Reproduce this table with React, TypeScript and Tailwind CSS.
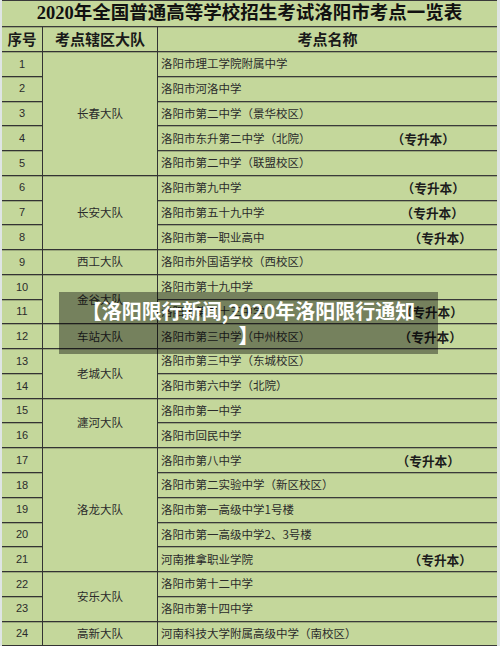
const rows = [
  { no: 1, name: "洛阳市理工学院附属中学" },
  { no: 2, name: "洛阳市河洛中学" },
  { no: 3, name: "洛阳市第二中学（景华校区）" },
  { no: 4, name: "洛阳市东升第二中学（北院）", tag: "mr-[42px]" },
  { no: 5, name: "洛阳市第二中学（联盟校区）" },
  { no: 6, name: "洛阳市第九中学", tag: "mr-[32px]" },
  { no: 7, name: "洛阳市第五十九中学", tag: "mr-[33px]" },
  { no: 8, name: "洛阳市第一职业高中", tag: "mr-[25px]" },
  { no: 9, name: "洛阳市外国语学校（西校区）" },
  { no: 10, name: "洛阳市第十九中学" },
  { no: 11, name: "洛阳市第二十三中学", tag: "mr-[34px]" },
  { no: 12, name: "洛阳市第三中学（中州校区）", tag: "mr-[35px]" },
  { no: 13, name: "洛阳市第三中学（东城校区）" },
  { no: 14, name: "洛阳市第六中学（北院）" },
  { no: 15, name: "洛阳市第一中学" },
  { no: 16, name: "洛阳市回民中学" },
  { no: 17, name: "洛阳市第八中学", tag: "mr-[37px]" },
  { no: 18, name: "洛阳市第二实验中学（新区校区）" },
  { no: 19, name: "洛阳市第一高级中学1号楼" },
  { no: 20, name: "洛阳市第一高级中学2、3号楼" },
  { no: 21, name: "河南推拿职业学院", tag: "mr-[25px]" },
  { no: 22, name: "洛阳市第十二中学" },
  { no: 23, name: "洛阳市第十四中学" },
  { no: 24, name: "河南科技大学附属高级中学（南校区）" },
];

// group starts at row number -> [label, span class]
const groups: Record<number, [string, string]> = {
  1: ["长春大队", "row-span-5"],
  6: ["长安大队", "row-span-3"],
  9: ["西工大队", "row-span-1"],
  10: ["金谷大队", "row-span-2"],
  12: ["车站大队", "row-span-1"],
  13: ["老城大队", "row-span-2"],
  15: ["瀍河大队", "row-span-2"],
  17: ["洛龙大队", "row-span-5"],
  22: ["安乐大队", "row-span-2"],
  24: ["高新大队", "row-span-1"],
};

const cjk = { fontFamily: '"Noto Sans CJK SC", sans-serif' };
const line = "border-b border-[#3a3a3a] shadow-[inset_0_1px_0_#9aa77c]";

const App = () => {
  return (
    <div className="relative w-[500px] h-[646px] overflow-hidden bg-[#c4d79b] border-l-2 border-r-[3px] border-[#dfe5e4]" style={cjk}>
      <div className="grid grid-cols-[41px_115px_1fr] grid-rows-[26.5px_25.5px] auto-rows-[24.77px]">
        {/* title */}
        <div
          className="col-span-3 flex items-center justify-center border-b border-t border-[#3a3a3a] text-[18.5px] font-bold text-[#111] leading-none"
          style={{ fontFamily: '"Liberation Serif", "Noto Sans CJK SC", serif' }}
        >
          2020年全国普通高等学校招生考试洛阳市考点一览表
        </div>

        {/* header */}
        <div className={`flex items-center justify-center border-r border-[#333] text-[14.5px] font-bold text-[#1a1a1a] ${line}`}>序号</div>
        <div className={`flex items-center justify-center border-r border-[#333] text-[15px] font-bold text-[#1a1a1a] ${line}`}>考点辖区大队</div>
        <div className={`flex items-center justify-center text-[15px] font-bold text-[#1a1a1a] ${line}`}>考点名称</div>

        {rows.map((r) => {
          const g = groups[r.no];
          return [
            <div
              key={`n${r.no}`}
              className={`flex items-center justify-center border-r border-[#333] text-[11px] text-[#2b2b2b] ${line}`}
              style={{ fontFamily: '"Liberation Sans", sans-serif' }}
            >
              {r.no}
            </div>,
            g && (
              <div key={`g${r.no}`} className={`${g[1]} flex items-center justify-center border-r border-[#333] text-[11.5px] text-[#2b2b2b] ${line}`}>
                {g[0]}
              </div>
            ),
            <div key={`s${r.no}`} className={`flex items-center justify-between pl-[3px] text-[11.5px] text-[#2b2b2b] whitespace-nowrap ${line}`}>
              <span>{r.name}</span>
              {r.tag && <span className={`${r.tag} text-[12.7px] font-bold text-[#1c1c1c]`}>（专升本）</span>}
            </div>,
          ];
        })}
      </div>

      {/* caption laid over the sheet */}
      <div className="absolute left-[57px] top-[292px] w-[379px] h-[62px] bg-black/40 flex flex-col items-center justify-center text-white text-[20px] font-bold leading-[24px] text-center">
        <span>【洛阳限行新闻,2020年洛阳限行通知</span>
        <span>】</span>
      </div>
    </div>
  );
};

export default App;
